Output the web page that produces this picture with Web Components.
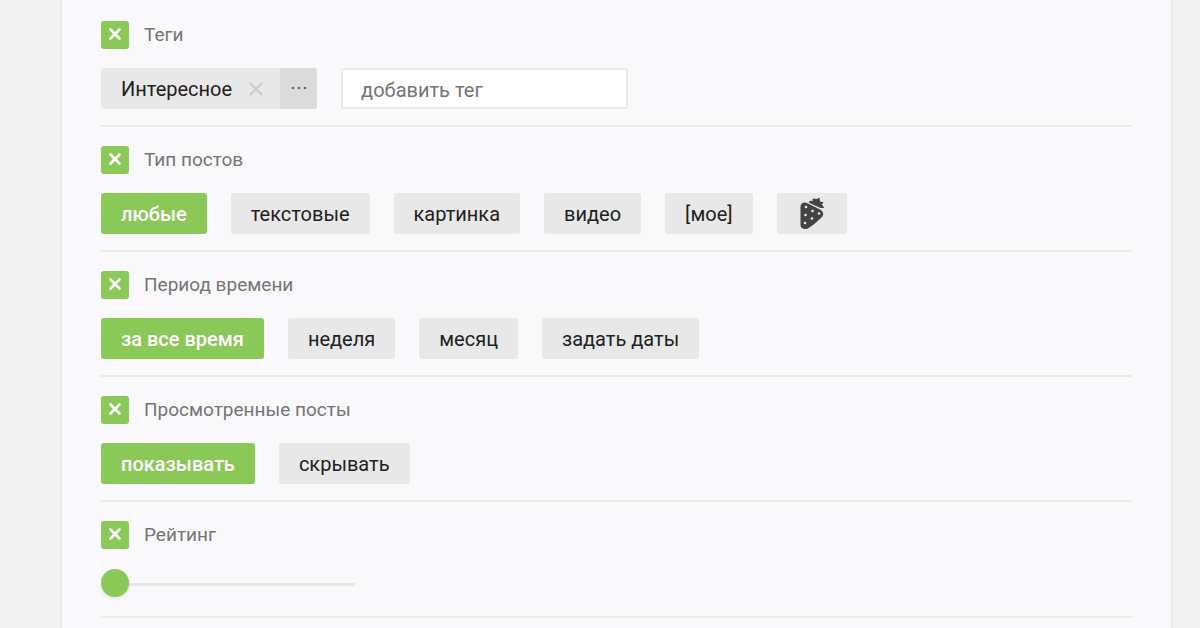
<!DOCTYPE html>
<html lang="ru">
<head>
<meta charset="utf-8">
<meta name="viewport" content="width=device-width, initial-scale=1">
<title>Фильтр постов</title>
<style>
  body {
    margin: 0;
    background: #f3f3f3;
    color: #212121;
    font: 20px/28px Roboto, "Open Sans", sans-serif;
    --accent: #8ac858;
    --chip: #e8e8e8;
    --chip-dark: #dbdbdb;
    --line: #eaeaeb;
    --muted: #757575;
  }
</style>
</head>
<body>
<filter-panel>
  <filter-section caption="Теги">
    <tag-chip>Интересное</tag-chip>
    <tag-input placeholder="добавить тег"></tag-input>
  </filter-section>
  <filter-section caption="Тип постов">
    <filter-chip selected>любые</filter-chip>
    <filter-chip>текстовые</filter-chip>
    <filter-chip>картинка</filter-chip>
    <filter-chip>видео</filter-chip>
    <filter-chip>[мое]</filter-chip>
    <filter-chip label="Клубничка"><berry-icon></berry-icon></filter-chip>
  </filter-section>
  <filter-section caption="Период времени">
    <filter-chip selected>за все время</filter-chip>
    <filter-chip>неделя</filter-chip>
    <filter-chip>месяц</filter-chip>
    <filter-chip>задать даты</filter-chip>
  </filter-section>
  <filter-section caption="Просмотренные посты">
    <filter-chip selected>показывать</filter-chip>
    <filter-chip>скрывать</filter-chip>
  </filter-section>
  <filter-section caption="Рейтинг">
    <rating-slider label="Рейтинг"></rating-slider>
  </filter-section>
</filter-panel>

<script>
  class BaseElement extends HTMLElement {
    constructor() {
      super();
      this.attachShadow({ mode: "open" });
    }
    connectedCallback() {
      if (!this.shadowRoot.firstChild) this.shadowRoot.innerHTML = this.render();
      this.ready();
    }
    ready() {}
    text(name) {
      return (this.getAttribute(name) || "").replace(/&/g, "&amp;").replace(/"/g, "&quot;").replace(/</g, "&lt;");
    }
  }

  customElements.define("filter-panel", class extends BaseElement {
    render() {
      return `
        <style>
          :host {
            display: block;
            box-sizing: border-box;
            min-height: 100vh;
            margin: 0 27px 0 60px;
            padding: 2px 39px 0;
            border: solid var(--line);
            border-width: 0 2px;
            background: #f9f9fb;
          }
        </style>
        <slot></slot>`;
    }
  });

  customElements.define("filter-section", class extends BaseElement {
    render() {
      return `
        <style>
          :host { display: block; padding: 19px 0 16px; border-bottom: 2px solid var(--line); }
          header { display: flex; align-items: center; gap: 15px; margin-bottom: 19px; }
          h2 { margin: 0; font-size: 19px; line-height: 28px; font-weight: 400; color: var(--muted); }
          button {
            display: grid; place-items: center;
            width: 28px; height: 28px; padding: 0 0 2px;
            border: 0; border-radius: 3px;
            background: var(--accent); cursor: pointer;
          }
          .row { display: flex; flex-wrap: wrap; gap: 24px; }
        </style>
        <header>
          <button type="button" aria-label="Сбросить: ${this.text("caption")}">
            <svg width="14" height="14" viewBox="0 0 14 14" aria-hidden="true">
              <path d="M2.500 2.500L11.500 11.500M11.500 2.500L2.500 11.500" stroke="#fff" stroke-width="2.600" stroke-linecap="round"/>
            </svg>
          </button>
          <h2>${this.text("caption")}</h2>
        </header>
        <div class="row"><slot></slot></div>`;
    }
    ready() {
      this.shadowRoot.querySelector("button").onclick = () => this.reset();
      this.addEventListener("chip-select", (e) => this.select(e.target));
    }
    select(chip) {
      this.querySelectorAll("filter-chip").forEach((c) => c.toggleAttribute("selected", c === chip));
    }
    reset() {
      this.select(this.querySelector("filter-chip"));
    }
  });

  customElements.define("filter-chip", class extends BaseElement {
    static observedAttributes = ["selected"];
    render() {
      const label = this.hasAttribute("label") ? `aria-label="${this.text("label")}"` : "";
      return `
        <style>
          :host { display: block; }
          button {
            display: flex; align-items: center;
            height: 41px; padding: 0 20px;
            border: 0; border-radius: 3px;
            background: var(--chip); color: inherit; font: inherit; cursor: pointer;
          }
          :host([selected]) button { background: var(--accent); color: #fff; font-weight: 500; }
        </style>
        <button type="button" ${label}><slot></slot></button>`;
    }
    ready() {
      this.shadowRoot.querySelector("button").onclick = () =>
        this.dispatchEvent(new CustomEvent("chip-select", { bubbles: true }));
      this.attributeChangedCallback();
    }
    attributeChangedCallback() {
      const button = this.shadowRoot.querySelector("button");
      if (button) button.setAttribute("aria-pressed", this.hasAttribute("selected"));
    }
  });

  customElements.define("berry-icon", class extends BaseElement {
    render() {
      return `
        <style>
          :host { display: flex; justify-content: center; width: 30px; }
          svg { display: block; }
        </style>
        <svg width="24" height="32" viewBox="0 0 24 32" aria-hidden="true">
          <path d="M.5 9C.5 5 4 3.500 8 5.500L20 11.500C24 14 24 17 21.500 19.500Q15 26 8 30.500C4 32 .5 30.500 .5 27Z" fill="#444"/>
          <path d="M9.500 3.500L13.500 3L13 1L17 1.500L19 0L19.500 4L23 4.500L21.500 6.500L23.500 9.500L20.500 9.500L9.500 4.500Z" fill="#444" stroke="#444" stroke-linejoin="round"/>
          <g fill="#e8e8e8">
            <circle cx="6" cy="9" r="1.300"/><circle cx="12.500" cy="13" r="1.300"/>
            <circle cx="5.500" cy="17" r="1.300"/><circle cx="19" cy="15.500" r="1.300"/>
            <circle cx="12" cy="20.500" r="1.300"/><circle cx="5" cy="25" r="1.300"/>
          </g>
        </svg>`;
    }
  });

  customElements.define("tag-chip", class extends BaseElement {
    render() {
      return `
        <style>
          :host {
            display: flex; align-items: stretch; height: 41px;
            border-radius: 3px; overflow: hidden; background: var(--chip);
          }
          .name { display: flex; align-items: center; padding-left: 20px; }
          button { display: grid; place-items: center; padding: 0; border: 0; background: none; cursor: pointer; }
          .remove { width: 48px; }
          .more { width: 37px; padding-bottom: 2px; background: var(--chip-dark); }
        </style>
        <span class="name"><slot></slot></span>
        <button type="button" class="remove" aria-label="Удалить тег">
          <svg width="14" height="14" viewBox="0 0 14 14" aria-hidden="true">
            <path d="M1 1L13 13M13 1L1 13" stroke="#c6c6c6" stroke-width="1.800"/>
          </svg>
        </button>
        <button type="button" class="more" aria-label="Ещё">
          <svg width="16" height="4" viewBox="0 0 16 4" aria-hidden="true" fill="#666">
            <circle cx="2" cy="2" r="1.300"/><circle cx="8" cy="2" r="1.300"/><circle cx="14" cy="2" r="1.300"/>
          </svg>
        </button>`;
    }
    ready() {
      this.shadowRoot.querySelector(".remove").onclick = () => this.remove();
    }
  });

  customElements.define("tag-input", class extends BaseElement {
    render() {
      return `
        <style>
          :host { display: block; flex: 0 1 287px; }
          input {
            box-sizing: border-box; width: 100%; height: 41px;
            padding: 2px 18px 0; border: 2px solid var(--line); border-radius: 3px;
            background: #fff; color: inherit; font: inherit; display: block;
          }
          input::placeholder { color: var(--muted); opacity: 1; }
        </style>
        <input type="text" aria-label="${this.text("placeholder")}" placeholder="${this.text("placeholder")}">`;
    }
  });

  customElements.define("rating-slider", class extends BaseElement {
    render() {
      return `
        <style>
          :host { display: block; flex: 0 1 254px; padding-bottom: 2px; }
          input {
            appearance: none; -webkit-appearance: none;
            display: block; width: 100%; height: 30px; margin: 0;
            background: linear-gradient(#e6e6e7, #e6e6e7) 0 15px / 100% 3px no-repeat;
            cursor: pointer;
          }
          input::-webkit-slider-thumb {
            -webkit-appearance: none;
            width: 28px; height: 28px; border-radius: 50%;
            background: var(--accent); box-shadow: 0 2px 3px rgba(0, 0, 0, .08);
          }
        </style>
        <input type="range" min="0" max="100" value="0" aria-label="${this.text("label")}">`;
    }
  });
</script>
</body>
</html>
